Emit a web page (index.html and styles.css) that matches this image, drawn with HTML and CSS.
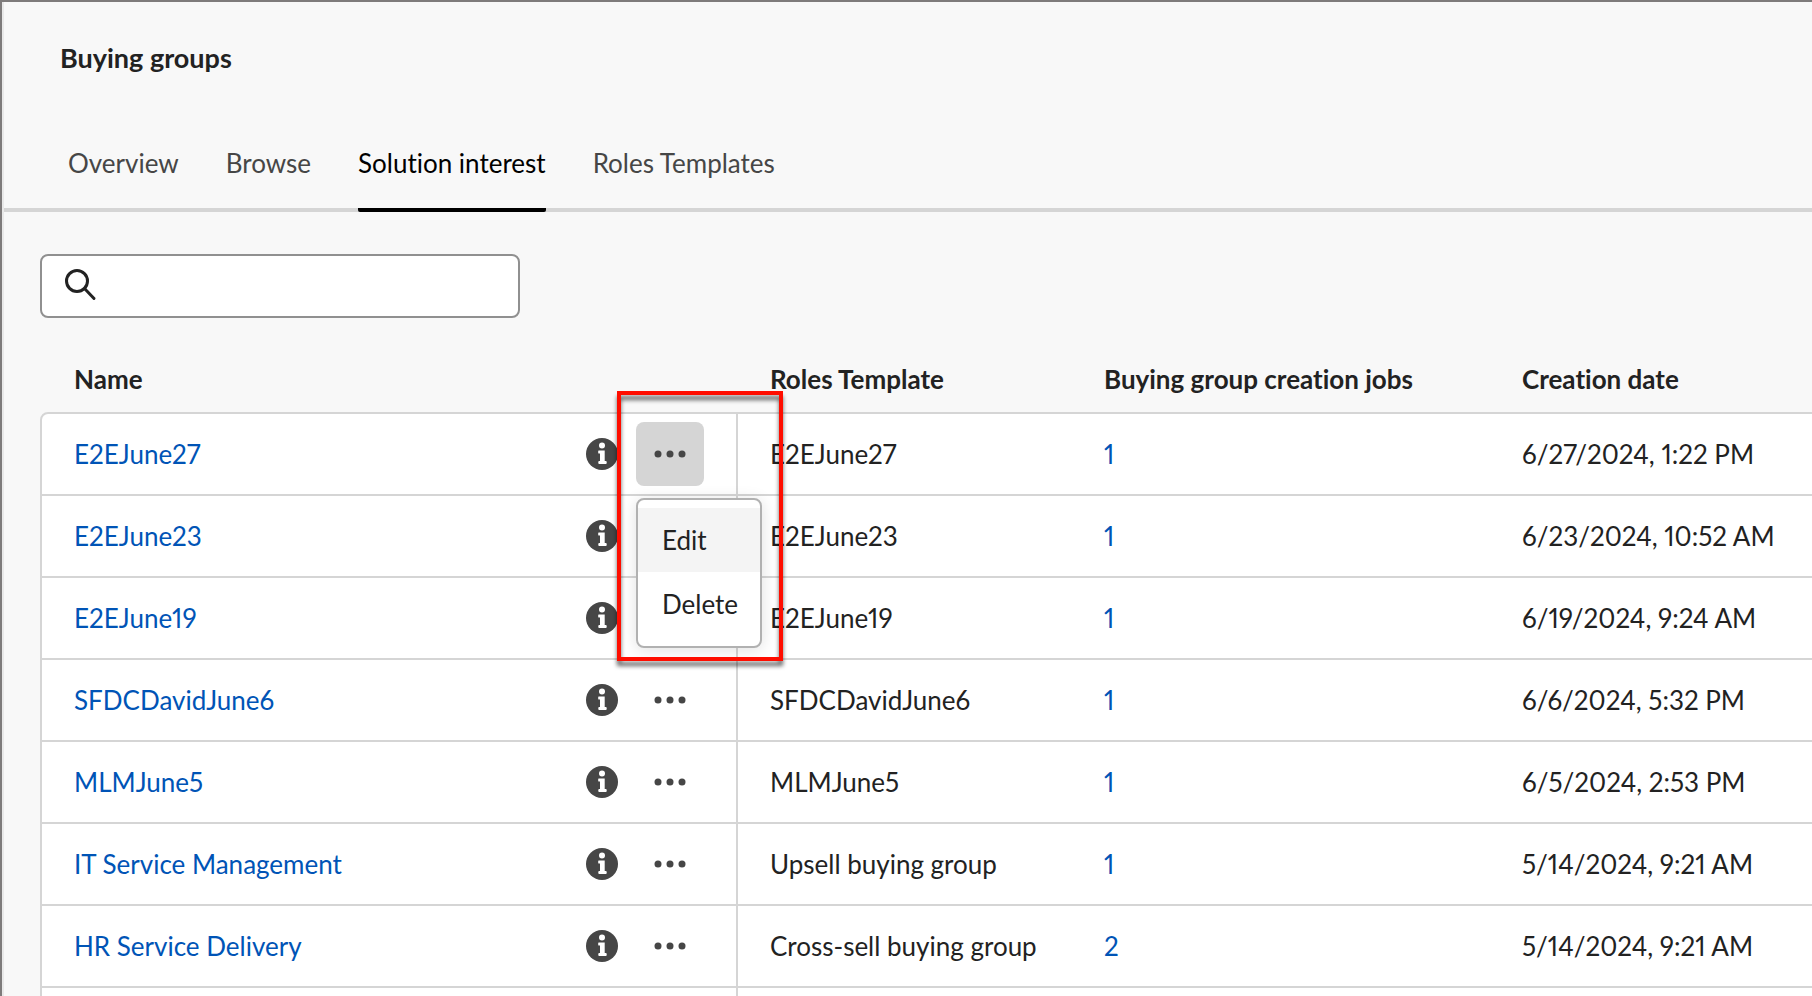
FILE: index.html
```html
<!DOCTYPE html>
<html lang="en">
<head>
<meta charset="utf-8">
<title>Buying groups</title>
<link rel="stylesheet" href="styles.css">
</head>
<body>
<svg class="sprite" aria-hidden="true">
  <symbol id="icon-info" viewBox="0 0 32 32">
    <circle cx="16" cy="16" r="16" fill="#464646"/>
    <circle cx="16" cy="7.4" r="3" fill="#fff"/>
    <path d="M12.6 12.500h6.1v10.500h1.1q.9 0 .9.9v1.2q0 .9-.9.9h-6.6q-.9 0-.9-.9v-1.2q0-.9.9-.9h.8v-7.500h-1.400q-.4 0-.4-.4v-2.200q0-.4.4-.4z" fill="#fff"/>
  </symbol>
  <symbol id="icon-more" viewBox="0 0 32 32">
    <circle cx="4" cy="16" r="3.500" fill="#464646"/>
    <circle cx="16" cy="16" r="3.500" fill="#464646"/>
    <circle cx="28" cy="16" r="3.500" fill="#464646"/>
  </symbol>
</svg>
<div class="app">
  <header class="header">
    <h1 class="title">Buying groups</h1>
    <nav class="tabs">
      <a class="tab" href="#overview">Overview</a>
      <a class="tab" href="#browse">Browse</a>
      <a class="tab tab-active" href="#solution-interest" aria-current="page">Solution interest</a>
      <a class="tab" href="#roles-templates">Roles Templates</a>
    </nav>
  </header>
  <main class="content">
    <label class="search">
      <svg class="search-icon" viewBox="0 0 32 32" aria-hidden="true">
        <circle cx="13" cy="11" r="10.500" fill="none" stroke="#222" stroke-width="3"/>
        <path d="M20.500 18.500 30 28.500" fill="none" stroke="#222" stroke-width="3" stroke-linecap="round"/>
      </svg>
      <input class="search-input" type="text" aria-label="Search">
    </label>
    <table class="grid">
      <colgroup><col class="col-name"><col class="col-roles"><col class="col-jobs"><col></colgroup>
      <thead>
        <tr><th>Name</th><th>Roles Template</th><th>Buying group creation jobs</th><th>Creation date</th></tr>
      </thead>
      <tbody>
        <tr>
          <td><div class="name-cell"><a class="link" href="#r1">E2EJune27</a>
            <div class="actions">
              <button class="info" aria-label="Details"><svg class="icon"><use href="#icon-info"/></svg></button>
              <button class="more more-open" aria-label="More actions" aria-expanded="true"><svg class="icon"><use href="#icon-more"/></svg></button>
              <div class="menu" role="menu">
                <button class="menu-item menu-item-hover" role="menuitem">Edit</button>
                <button class="menu-item" role="menuitem">Delete</button>
              </div>
              <div class="highlight"></div>
            </div></div></td>
          <td>E2EJune27</td><td><a class="link" href="#j1">1</a></td><td>6/27/2024, 1:22 PM</td>
        </tr>
        <tr>
          <td><div class="name-cell"><a class="link" href="#r2">E2EJune23</a>
            <div class="actions"><button class="info" aria-label="Details"><svg class="icon"><use href="#icon-info"/></svg></button><button class="more" aria-label="More actions"><svg class="icon"><use href="#icon-more"/></svg></button></div></div></td>
          <td>E2EJune23</td><td><a class="link" href="#j2">1</a></td><td>6/23/2024, 10:52 AM</td>
        </tr>
        <tr>
          <td><div class="name-cell"><a class="link" href="#r3">E2EJune19</a>
            <div class="actions"><button class="info" aria-label="Details"><svg class="icon"><use href="#icon-info"/></svg></button><button class="more" aria-label="More actions"><svg class="icon"><use href="#icon-more"/></svg></button></div></div></td>
          <td>E2EJune19</td><td><a class="link" href="#j3">1</a></td><td>6/19/2024, 9:24 AM</td>
        </tr>
        <tr>
          <td><div class="name-cell"><a class="link" href="#r4">SFDCDavidJune6</a>
            <div class="actions"><button class="info" aria-label="Details"><svg class="icon"><use href="#icon-info"/></svg></button><button class="more" aria-label="More actions"><svg class="icon"><use href="#icon-more"/></svg></button></div></div></td>
          <td>SFDCDavidJune6</td><td><a class="link" href="#j4">1</a></td><td>6/6/2024, 5:32 PM</td>
        </tr>
        <tr>
          <td><div class="name-cell"><a class="link" href="#r5">MLMJune5</a>
            <div class="actions"><button class="info" aria-label="Details"><svg class="icon"><use href="#icon-info"/></svg></button><button class="more" aria-label="More actions"><svg class="icon"><use href="#icon-more"/></svg></button></div></div></td>
          <td>MLMJune5</td><td><a class="link" href="#j5">1</a></td><td>6/5/2024, 2:53 PM</td>
        </tr>
        <tr>
          <td><div class="name-cell"><a class="link" href="#r6">IT Service Management</a>
            <div class="actions"><button class="info" aria-label="Details"><svg class="icon"><use href="#icon-info"/></svg></button><button class="more" aria-label="More actions"><svg class="icon"><use href="#icon-more"/></svg></button></div></div></td>
          <td>Upsell buying group</td><td><a class="link" href="#j6">1</a></td><td>5/14/2024, 9:21 AM</td>
        </tr>
        <tr>
          <td><div class="name-cell"><a class="link" href="#r7">HR Service Delivery</a>
            <div class="actions"><button class="info" aria-label="Details"><svg class="icon"><use href="#icon-info"/></svg></button><button class="more" aria-label="More actions"><svg class="icon"><use href="#icon-more"/></svg></button></div></div></td>
          <td>Cross-sell buying group</td><td><a class="link" href="#j7">2</a></td><td>5/14/2024, 9:21 AM</td>
        </tr>
        <tr><td></td><td></td><td></td><td></td></tr>
      </tbody>
    </table>
  </main>
</div>
</body>
</html>
```
FILE: styles.css
```css
* { box-sizing: border-box; }

body {
  margin: 0;
  background: #f8f8f8;
  color: #222;
  font: 26px/32px Lato, "Noto Sans", sans-serif;
  font-variant-ligatures: none;
  font-variant-numeric: proportional-nums;
}

button, input { font: inherit; color: inherit; }
button { border: 0; padding: 0; background: none; cursor: pointer; }

.sprite { display: none; }

.app {
  height: 100vh;
  overflow: hidden;
  border-top: 2px solid #7e7b7b;
  border-left: 2px solid #7e7b7b;
  box-shadow: inset 2px 0 0 #e9e9e9;
}

.header {
  margin-left: 2px;
  padding-top: 38px;
  border-bottom: 4px solid #d5d5d5;
}

.title {
  margin: 0;
  padding-left: 56px;
  font-size: 27px;
  line-height: 36px;
  font-weight: 700;
}

.tabs {
  display: flex;
  gap: 47px;
  margin-bottom: -4px;
  padding: 69px 0 0 64px;
}

.tab {
  padding-bottom: 27px;
  line-height: 36px;
  border-bottom: 4px solid transparent;
  border-radius: 2px;
  color: #464646;
  text-decoration: none;
  white-space: nowrap;
}

.tab-active { color: #000; border-bottom-color: #000; }

.content { padding: 42px 0 0 38px; }

.search {
  display: flex;
  align-items: center;
  gap: 16px;
  width: 480px;
  height: 64px;
  padding: 0 22px;
  border: 2px solid #909090;
  border-radius: 8px;
  background: #fff;
}

.search-icon { flex: none; width: 32px; height: 32px; overflow: visible; }
.search-input { flex: 1; min-width: 0; border: 0; outline: 0; background: none; }

.grid {
  width: 100%;
  margin-top: 28px;
  border-collapse: separate;
  border-spacing: 0;
  table-layout: fixed;
}

.col-name { width: 698px; }
.col-roles { width: 334px; }
.col-jobs { width: 418px; }

.grid th {
  height: 66px;
  padding: 0 0 0 32px;
  text-align: left;
  white-space: nowrap;
}

.grid td {
  height: 82px;
  padding: 0 0 0 32px;
  border-bottom: 2px solid #d5d5d5;
  background: #fff;
  white-space: nowrap;
}

.grid td:first-child {
  border-left: 2px solid #d5d5d5;
  border-right: 2px solid #d5d5d5;
}

.grid tbody tr:first-child td { height: 84px; border-top: 2px solid #d5d5d5; }
.grid tbody tr:first-child td:first-child { border-top-left-radius: 8px; }

.name-cell {
  display: flex;
  align-items: center;
  justify-content: space-between;
  padding-right: 32px;
}

.grid th:first-child { padding-left: 34px; }

.link { color: #0054b6; text-decoration: none; }

.actions { position: relative; display: flex; align-items: center; gap: 18px; }
.icon { display: block; width: 32px; height: 32px; }

.more {
  display: grid;
  place-items: center;
  width: 68px;
  height: 64px;
  border-radius: 8px;
}

.more-open { background: #d5d5d5; }

.menu {
  position: absolute;
  top: 76px;
  left: 50px;
  z-index: 1;
  width: 126px;
  padding: 8px 0 10px;
  border: 2px solid #b1b1b1;
  border-radius: 8px;
  background: #fff;
  box-shadow: 0 2px 16px rgba(0, 0, 0, .12);
}

.menu-item {
  display: block;
  width: 100%;
  height: 64px;
  padding-left: 24px;
  text-align: left;
}

.menu-item-hover { background: #f4f4f4; }

.highlight {
  position: absolute;
  top: -31px;
  left: 31px;
  z-index: 2;
  width: 166px;
  height: 270px;
  border: 4px solid #ff0d00;
  filter: drop-shadow(0 5px 2px rgba(0, 0, 0, .6));
  pointer-events: none;
}
```
